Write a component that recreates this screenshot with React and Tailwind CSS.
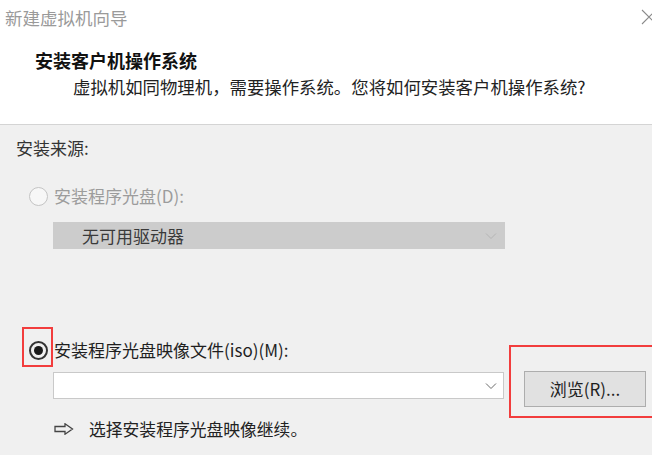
import React from 'react'

const font = { fontFamily: '"Noto Sans CJK SC", "Noto Sans", sans-serif' }

function Chevron({ color = '#6b6b6b' }) {
  return (
    <svg width="12" height="8" viewBox="0 0 12 8" className="shrink-0">
      <path d="M1 1.5 L6 6.5 L11 1.5" fill="none" stroke={color} strokeWidth="1" />
    </svg>
  )
}

export default function App() {
  return (
    <div className="w-[652px] h-[455px] overflow-hidden flex flex-col bg-[#f0f0f0] text-[#333]" style={font}>
      {/* header */}
      <div className="h-[125px] shrink-0 bg-white border-b border-[#d4d4d4] flex flex-col">
        <div className="flex justify-between items-start pl-[5px] pt-[6px]">
          <span className="text-[17.5px] leading-[24px] text-[#9a9a9a]">新建虚拟机向导</span>
          <svg width="16" height="16" viewBox="0 0 16 16" className="mt-[3px] mr-[-5px]">
            <path d="M1 1 L15 15 M15 1 L1 15" stroke="#8a8a8a" strokeWidth="1.1" fill="none" />
          </svg>
        </div>
        <div className="pl-[35px] mt-[18px] text-[18px] leading-[24px] font-bold text-[#111]">安装客户机操作系统</div>
        <div className="pl-[73px] mt-[3px] text-[17.4px] leading-[24px] text-[#222]">
          虚拟机如同物理机，需要操作系统。您将如何安装客户机操作系统?
        </div>
      </div>

      {/* body */}
      <div className="flex flex-col">
        <div className="pl-[16px] mt-[11px] text-[17px] leading-[24px]">安装来源:</div>

        <div className="flex items-center mt-[24px] h-[24px]">
          <span className="ml-[29px] w-[19px] h-[19px] rounded-full border border-[#c4c4c4] bg-[#f7f7f7]" />
          <span className="ml-[6px] text-[17px] leading-[24px] text-[#9c9c9c]">安装程序光盘(D):</span>
        </div>

        <div className="ml-[53px] mt-[14px] w-[452px] h-[27px] bg-[#cccccc] flex items-center justify-between pl-[29px] pr-[8px]">
          <span className="text-[17px] leading-[24px] text-[#3a3a3a]">无可用驱动器</span>
          <Chevron color="#b5b5b5" />
        </div>

        <div className="flex items-center mt-[89px] h-[24px] relative">
          <div className="absolute left-[22px] top-[-11px] w-[31px] h-[40px] border-2 border-[#f23d3d]" />
          <span className="ml-[29px] w-[19px] h-[19px] rounded-full border-2 border-[#333] flex items-center justify-center">
            <span className="w-[9px] h-[9px] rounded-full bg-[#1a1a1a]" />
          </span>
          <span className="ml-[6px] text-[17px] leading-[24px] text-[#1f1f1f]">安装程序光盘映像文件(iso)(M):</span>
        </div>

        <div className="flex items-start mt-[10px]">
          <div className="ml-[53px] w-[451px] h-[27px] bg-white border border-[#c9c9c9] flex items-center justify-end pr-[6px]">
            <Chevron />
          </div>
          <div className="relative ml-[20px] mt-[-1px]">
            <div className="absolute left-[-15px] top-[-26px] w-[150px] h-[73px] border-2 border-[#f23d3d]" />
            <button className="w-[122px] h-[36px] bg-[#e1e1e1] border border-[#adadad] text-[17px] leading-[24px] text-[#1f1f1f]" style={font}>
              浏览(R)...
            </button>
          </div>
        </div>

        <div className="flex items-center mt-[10px] h-[24px]">
          <svg width="20" height="12" viewBox="0 0 20 12" className="ml-[54px]">
            <path d="M1 3.5 H11 V0.8 L18.5 6 L11 11.2 V8.5 H1 Z" fill="none" stroke="#444" strokeWidth="1.3" strokeLinejoin="miter" />
          </svg>
          <span className="ml-[15px] text-[16.8px] leading-[24px] text-[#222]">选择安装程序光盘映像继续。</span>
        </div>
      </div>
    </div>
  )
}
